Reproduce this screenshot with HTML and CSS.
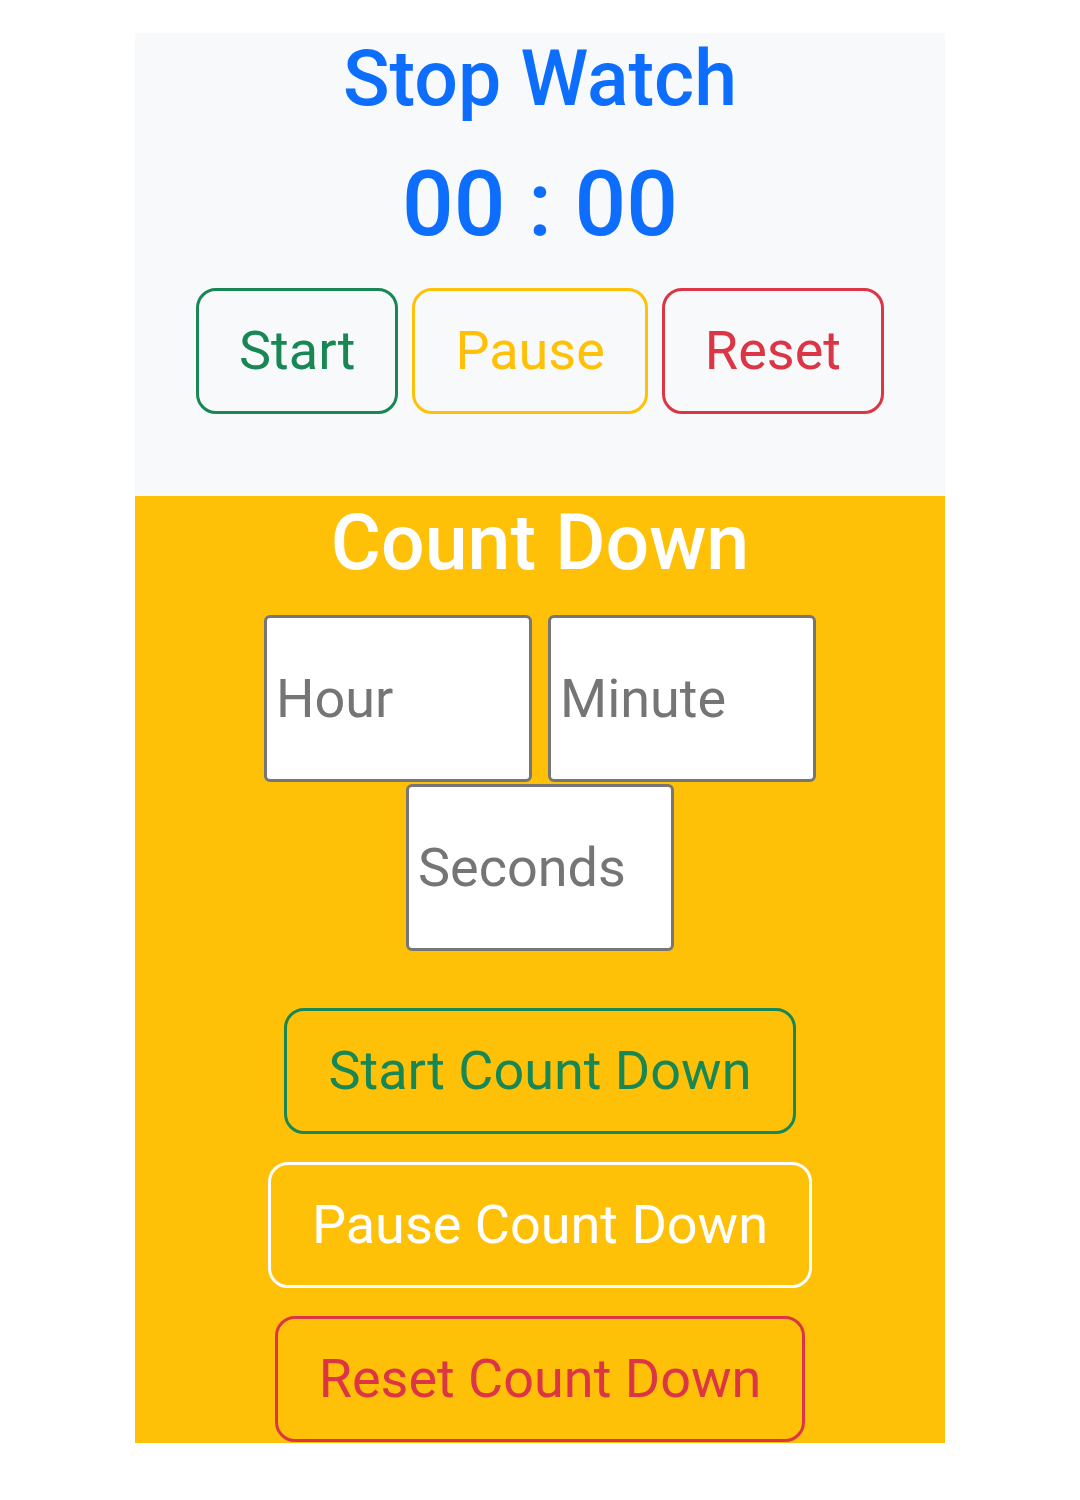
FILE: index.html
```html
<!DOCTYPE html>
<html lang="en">
<head>
<meta charset="utf-8">
<title>Stop Watch</title>
<link rel="stylesheet" href="styles.css">
</head>
<body>
<div class="page">
  <section class="stopwatch">
    <h1 class="title title-blue">Stop Watch</h1>
    <div class="timer">00 : 00</div>
    <div class="btn-row">
      <button class="btn btn-green">Start</button>
      <button class="btn btn-yellow">Pause</button>
      <button class="btn btn-red">Reset</button>
    </div>
  </section>
  <section class="countdown">
    <h1 class="title title-white">Count Down</h1>
    <div class="inputs">
      <input class="field" type="text" placeholder="Hour">
      <input class="field" type="text" placeholder="Minute">
      <input class="field" type="text" placeholder="Seconds">
    </div>
    <div class="btn-col">
      <button class="btn btn-green">Start Count Down</button>
      <button class="btn btn-white">Pause Count Down</button>
      <button class="btn btn-red">Reset Count Down</button>
    </div>
  </section>
</div>
</body>
</html>
```
FILE: styles.css
```css
html, body {
  margin: 0;
  padding: 0;
  background: #ffffff;
  font-family: Roboto, "Liberation Sans", sans-serif;
}
.page {
  width: 810px;
  margin: 0 auto;
  padding-top: 33px;
}
.stopwatch {
  background: #f8f9fa;
  text-align: center;
  height: 463px;
  box-sizing: border-box;
}
.title {
  margin: 0;
  font-size: 77px;
  font-weight: 500;
  line-height: 1.2;
}
.title-blue { color: #0d6efd; }
.title-white { color: #ffffff; }
.timer {
  margin-top: 25px;
  font-size: 91px;
  font-weight: 500;
  line-height: 1.2;
  color: #0d6efd;
}
.btn-row {
  margin-top: 28px;
  display: flex;
  justify-content: center;
  gap: 14px;
}
.btn {
  font-family: Roboto, "Liberation Sans", sans-serif;
  font-size: 54px;
  font-weight: 400;
  line-height: 80px;
  padding: 20px 41px;
  border: 3px solid;
  border-radius: 20px;
  background: transparent;
  box-sizing: border-box;
  height: 126px;
}
.btn-row .btn {
  padding: 20px 40px;
}
.btn-green { color: #198754; border-color: #198754; }
.btn-yellow { color: #ffc107; border-color: #ffc107; }
.btn-red { color: #dc3545; border-color: #dc3545; }
.btn-white { color: #ffffff; border-color: #ffffff; }
.countdown {
  background: #ffc107;
  text-align: center;
  height: 947px;
  box-sizing: border-box;
  padding-top: 1px;
}
.inputs {
  width: 560px;
  margin: 26px auto 0;
  display: flex;
  flex-wrap: wrap;
  justify-content: center;
  gap: 2px 16px;
}
.field {
  width: 268px;
  height: 167px;
  box-sizing: border-box;
  border: 3px solid #767676;
  border-radius: 6px;
  background: #ffffff;
  padding: 0 9px;
  font-family: Roboto, "Liberation Sans", sans-serif;
  font-size: 54px;
  color: #333;
}
.field::placeholder {
  color: #757575;
  opacity: 1;
}
.btn-col {
  margin-top: 57px;
  display: flex;
  flex-direction: column;
  align-items: center;
  gap: 28px;
}
```
